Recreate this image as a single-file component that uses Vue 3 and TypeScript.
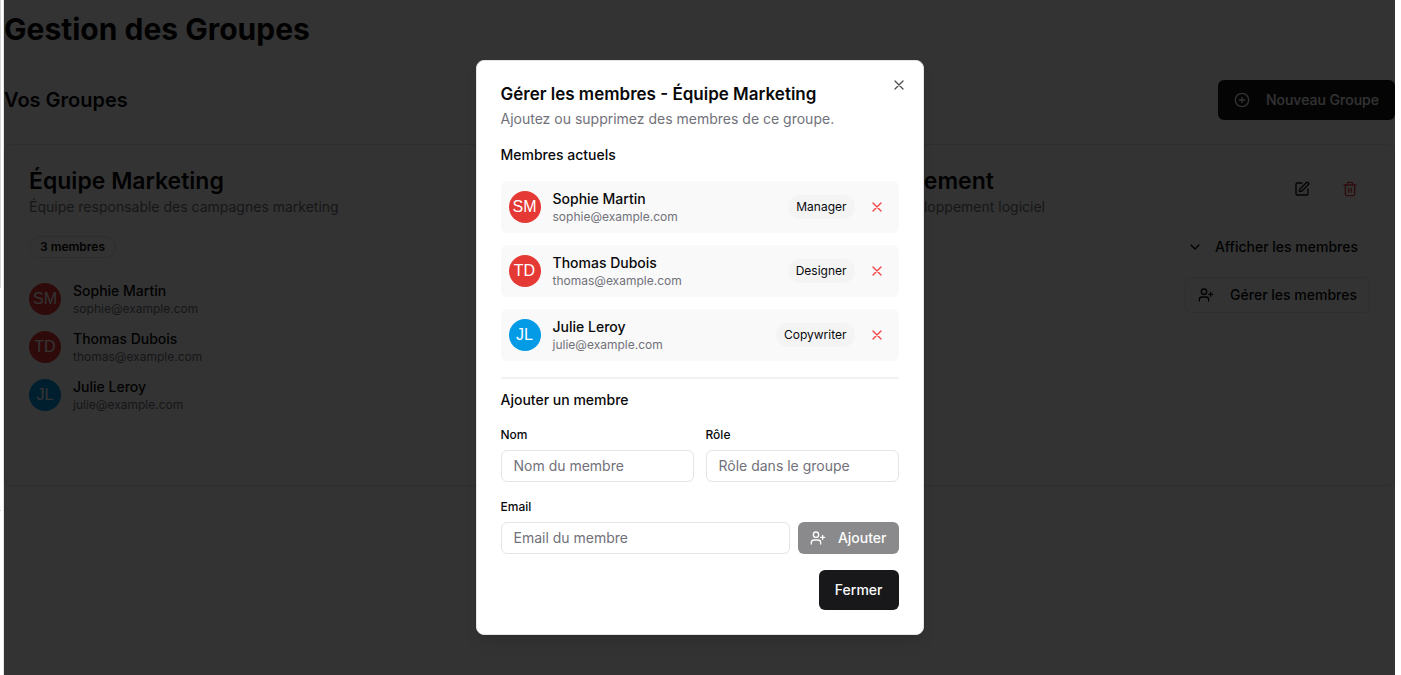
<script setup lang="ts">
import { ref } from 'vue'

interface Member {
  name: string
  email: string
  role: string
  initials: string
  tone: 'red' | 'blue'
}

interface Group {
  name: string
  description: string
  expanded: boolean
  members: Member[]
}

const marketing: Member[] = [
  { name: 'Sophie Martin', email: 'sophie@example.com', role: 'Manager', initials: 'SM', tone: 'red' },
  { name: 'Thomas Dubois', email: 'thomas@example.com', role: 'Designer', initials: 'TD', tone: 'red' },
  { name: 'Julie Leroy', email: 'julie@example.com', role: 'Copywriter', initials: 'JL', tone: 'blue' },
]

const groups = ref<Group[]>([
  {
    name: 'Équipe Marketing',
    description: 'Équipe responsable des campagnes marketing',
    expanded: true,
    members: marketing,
  },
  {
    name: 'Équipe Développement',
    description: 'Équipe responsable du développement logiciel',
    expanded: false,
    members: [],
  },
])

const nom = ref('')
const role = ref('')
const email = ref('')
</script>

<template>
  <div class="shell">
    <div class="rail"><span class="thumb"></span><span class="tick"></span></div>

    <main class="page">
      <h1>Gestion des Groupes</h1>

      <div class="toolbar">
        <h2>Vos Groupes</h2>
        <button type="button" class="btn primary">
          <svg class="icon" viewBox="0 0 24 24"><circle cx="12" cy="12" r="10" /><path d="M8 12h8M12 8v8" /></svg>
          Nouveau Groupe
        </button>
      </div>

      <div class="cards">
        <section v-for="group in groups" :key="group.name" class="card">
          <header class="card-head">
            <div>
              <h3>{{ group.name }}</h3>
              <p class="muted">{{ group.description }}</p>
            </div>
            <div class="card-tools">
              <button type="button" class="tool" aria-label="Modifier">
                <svg class="icon" viewBox="0 0 24 24">
                  <path d="M12 3H5a2 2 0 0 0-2 2v14a2 2 0 0 0 2 2h14a2 2 0 0 0 2-2v-7" />
                  <path d="M18.375 2.625a1 1 0 0 1 3 3l-9.013 9.014a2 2 0 0 1-.853.505l-2.873.84a.5.5 0 0 1-.62-.62l.84-2.873a2 2 0 0 1 .506-.852z" />
                </svg>
              </button>
              <button type="button" class="tool danger" aria-label="Supprimer">
                <svg class="icon" viewBox="0 0 24 24">
                  <path d="M3 6h18M19 6v14a2 2 0 0 1-2 2H7a2 2 0 0 1-2-2V6M8 6V4a2 2 0 0 1 2-2h4a2 2 0 0 1 2 2v2M10 11v6M14 11v6" />
                </svg>
              </button>
            </div>
          </header>

          <div class="card-body">
            <div class="card-main">
              <span class="count">{{ group.members.length }} membres</span>
              <ul v-if="group.expanded" class="people">
                <li v-for="m in group.members" :key="m.email" class="person">
                  <span class="avatar" :class="m.tone">{{ m.initials }}</span>
                  <span class="who">
                    <span class="name">{{ m.name }}</span>
                    <span class="mail">{{ m.email }}</span>
                  </span>
                </li>
              </ul>
            </div>
            <div class="card-actions">
              <button type="button" class="btn small ghost" @click="group.expanded = !group.expanded">
                <svg class="icon" viewBox="0 0 24 24">
                  <path :d="group.expanded ? 'm18 15-6-6-6 6' : 'm6 9 6 6 6-6'" />
                </svg>
                {{ group.expanded ? 'Masquer' : 'Afficher' }} les membres
              </button>
              <button type="button" class="btn small outline">
                <svg class="icon" viewBox="0 0 24 24">
                  <path d="M16 21v-2a4 4 0 0 0-4-4H6a4 4 0 0 0-4 4v2M19 8v6M22 11h-6" /><circle cx="9" cy="7" r="4" />
                </svg>
                Gérer les membres
              </button>
            </div>
          </div>
        </section>
      </div>

      <div class="overlay">
        <div class="dialog" role="dialog" aria-modal="true" aria-labelledby="dialog-title">
          <button type="button" class="close" aria-label="Fermer la fenêtre">
            <svg class="icon" viewBox="0 0 24 24"><path d="M18 6 6 18M6 6l12 12" /></svg>
          </button>

          <div>
            <h2 id="dialog-title" class="dialog-title">Gérer les membres - Équipe Marketing</h2>
            <p class="muted dialog-text">Ajoutez ou supprimez des membres de ce groupe.</p>
          </div>

          <h4>Membres actuels</h4>

          <ul class="rows">
            <li v-for="m in marketing" :key="m.email" class="row">
              <span class="avatar" :class="m.tone">{{ m.initials }}</span>
              <span class="who">
                <span class="name">{{ m.name }}</span>
                <span class="mail">{{ m.email }}</span>
              </span>
              <span class="role">{{ m.role }}</span>
              <button type="button" class="remove" :aria-label="'Retirer ' + m.name">
                <svg class="icon" viewBox="0 0 24 24"><path d="M18 6 6 18M6 6l12 12" /></svg>
              </button>
            </li>
          </ul>

          <form class="add" @submit.prevent>
            <h4>Ajouter un membre</h4>
            <div class="pair">
              <div class="field">
                <label for="nom">Nom</label>
                <input id="nom" v-model="nom" type="text" placeholder="Nom du membre" />
              </div>
              <div class="field">
                <label for="role">Rôle</label>
                <input id="role" v-model="role" type="text" placeholder="Rôle dans le groupe" />
              </div>
            </div>
            <div class="field">
              <label for="email">Email</label>
              <div class="inline">
                <input id="email" v-model="email" type="email" placeholder="Email du membre" />
                <button type="submit" class="btn primary add-btn" :disabled="!nom || !email">
                  <svg class="icon" viewBox="0 0 24 24">
                    <path d="M16 21v-2a4 4 0 0 0-4-4H6a4 4 0 0 0-4 4v2M19 8v6M22 11h-6" /><circle cx="9" cy="7" r="4" />
                  </svg>
                  Ajouter
                </button>
              </div>
            </div>
          </form>

          <footer class="dialog-foot">
            <button type="button" class="btn primary">Fermer</button>
          </footer>
        </div>
      </div>
    </main>
  </div>
</template>

<style>
body {
  margin: 0;
  background: #fff;
}
</style>

<style scoped>
.shell {
  display: flex;
  min-height: 100vh;
  padding-right: 6px;
  box-sizing: border-box;
  font-family: Inter, 'Liberation Sans', sans-serif;
  font-size: 14px;
  line-height: 20px;
  color: #09090b;
}
.shell * {
  box-sizing: border-box;
}
h1, h2, h3, h4, p, ul {
  margin: 0;
  padding: 0;
}
ul {
  list-style: none;
}
button, input {
  font: inherit;
  color: inherit;
}
button {
  cursor: pointer;
}

.rail {
  display: flex;
  flex-direction: column;
  flex: none;
  width: 4px;
  border-right: 1px solid #e4e4e7;
}
.thumb {
  width: 1px;
  height: 288px;
  background: #d4d4d8;
}
.tick {
  width: 1px;
  height: 1px;
  margin-top: 222px;
  background: #d4d4d8;
}

.page {
  position: relative;
  flex: 1;
  min-width: 0;
  padding-top: 11px;
}
h1 {
  font-size: 30px;
  line-height: 36px;
  font-weight: 700;
}
.toolbar {
  display: flex;
  align-items: center;
  justify-content: space-between;
  margin-top: 33px;
}
.toolbar h2 {
  font-size: 20px;
  line-height: 28px;
  font-weight: 600;
}

.btn {
  display: inline-flex;
  align-items: center;
  justify-content: center;
  gap: 16px;
  height: 40px;
  padding: 0 16px;
  border: 0;
  border-radius: 6px;
  background: transparent;
  font-weight: 500;
  white-space: nowrap;
}
.btn.primary {
  background: #18181b;
  color: #fafafa;
}
.btn.small {
  height: 36px;
  padding: 0 12px;
}
.btn.ghost {
  gap: 12px;
}
.btn.outline {
  padding: 0 12px;
  border: 1px solid #e4e4e7;
}
.icon {
  flex: none;
  width: 16px;
  height: 16px;
  fill: none;
  stroke: currentColor;
  stroke-width: 2;
  stroke-linecap: round;
  stroke-linejoin: round;
}

.cards {
  display: grid;
  grid-template-columns: 1fr 1fr;
  gap: 24px;
  margin-top: 24px;
}
.card {
  min-height: 342px;
  padding: 24px;
  border: 1px solid #e4e4e7;
  border-radius: 8px;
  box-shadow: 0 1px 2px rgba(0, 0, 0, 0.05);
}
.card-head {
  display: flex;
  align-items: flex-start;
  justify-content: space-between;
}
.card-head h3 {
  font-size: 23px;
  line-height: 24px;
  font-weight: 600;
}
.muted {
  color: #71717a;
}
.card-head .muted {
  margin-top: 4px;
}
.card-tools {
  display: flex;
  gap: 8px;
}
.tool {
  display: grid;
  place-items: center;
  width: 40px;
  height: 40px;
  padding: 0;
  border: 0;
  background: transparent;
}
.danger {
  color: #ef4444;
}
.card-body {
  display: flex;
  justify-content: space-between;
  margin-top: 12px;
}
.card-main {
  padding-top: 7px;
}
.count {
  display: block;
  width: fit-content;
  padding: 2px 10px;
  border: 1px solid #e4e4e7;
  border-radius: 11px;
  font-size: 12px;
  line-height: 16px;
  font-weight: 600;
}
.card-actions {
  display: flex;
  flex-direction: column;
  align-items: flex-end;
  gap: 12px;
}
.people {
  display: grid;
  gap: 16px;
  margin-top: 25px;
}
.person {
  display: flex;
  align-items: center;
  gap: 12px;
  height: 32px;
}
.avatar {
  display: grid;
  place-items: center;
  flex: none;
  width: 32px;
  height: 32px;
  border-radius: 50%;
  color: #fff;
  font-family: 'Liberation Sans', Arial, sans-serif;
  font-size: 16px;
}
.red {
  background: #e53935;
}
.blue {
  background: #039be5;
}
.who {
  display: flex;
  flex-direction: column;
}
.name {
  font-weight: 500;
  line-height: 20px;
}
.mail {
  font-size: 12px;
  line-height: 16px;
  color: #71717a;
}

.overlay {
  position: absolute;
  inset: 0;
  display: flex;
  align-items: flex-start;
  justify-content: center;
  padding-top: 60px;
  background: rgba(0, 0, 0, 0.8);
}
.dialog {
  position: relative;
  display: grid;
  gap: 16px;
  width: 100%;
  max-width: 448px;
  padding: 24px;
  border: 1px solid #e4e4e7;
  border-radius: 8px;
  background: #fff;
  box-shadow: 0 10px 15px -3px rgba(0, 0, 0, 0.1), 0 4px 6px -4px rgba(0, 0, 0, 0.1);
}
.close {
  position: absolute;
  top: 16px;
  right: 16px;
  display: grid;
  padding: 0;
  border: 0;
  background: transparent;
  opacity: 0.7;
}
.dialog-title {
  font-size: 17px;
  line-height: 18px;
  font-weight: 600;
}
.dialog-text {
  margin-top: 6px;
}
h4 {
  font-size: 14px;
  line-height: 20px;
  font-weight: 500;
}
.rows {
  display: grid;
  gap: 12px;
}
.row {
  display: flex;
  align-items: center;
  gap: 8px;
  height: 52px;
  padding: 8px;
  border-radius: 6px;
  background: #f9f9f9;
}
.row .who {
  flex: 1;
  padding-left: 4px;
}
.role {
  padding: 4px 8px;
  border-radius: 12px;
  background: #f4f4f5;
  font-size: 12px;
  line-height: 16px;
}
.remove {
  display: grid;
  place-items: center;
  width: 28px;
  height: 28px;
  padding: 0;
  border: 0;
  background: transparent;
  color: #ef4444;
}
.add {
  display: grid;
  gap: 16px;
  padding-top: 11px;
  border-top: 2px solid #f1f1f2;
}
.pair {
  display: grid;
  grid-template-columns: 1fr 1fr;
  gap: 12px;
}
.field {
  display: grid;
  gap: 6px;
}
.field label {
  font-size: 12px;
  line-height: 18px;
  font-weight: 500;
}
.inline {
  display: flex;
  gap: 8px;
}
input {
  width: 100%;
  min-width: 0;
  height: 32px;
  padding: 0 12px 2px;
  border: 1px solid #e4e4e7;
  border-radius: 6px;
  background: #fff;
}
input::placeholder {
  color: #71717a;
  opacity: 1;
}
.add-btn {
  height: 32px;
  gap: 12px;
  padding: 0 12px;
}
.add-btn:disabled {
  opacity: 0.5;
}
.dialog-foot {
  display: flex;
  justify-content: flex-end;
}
</style>
